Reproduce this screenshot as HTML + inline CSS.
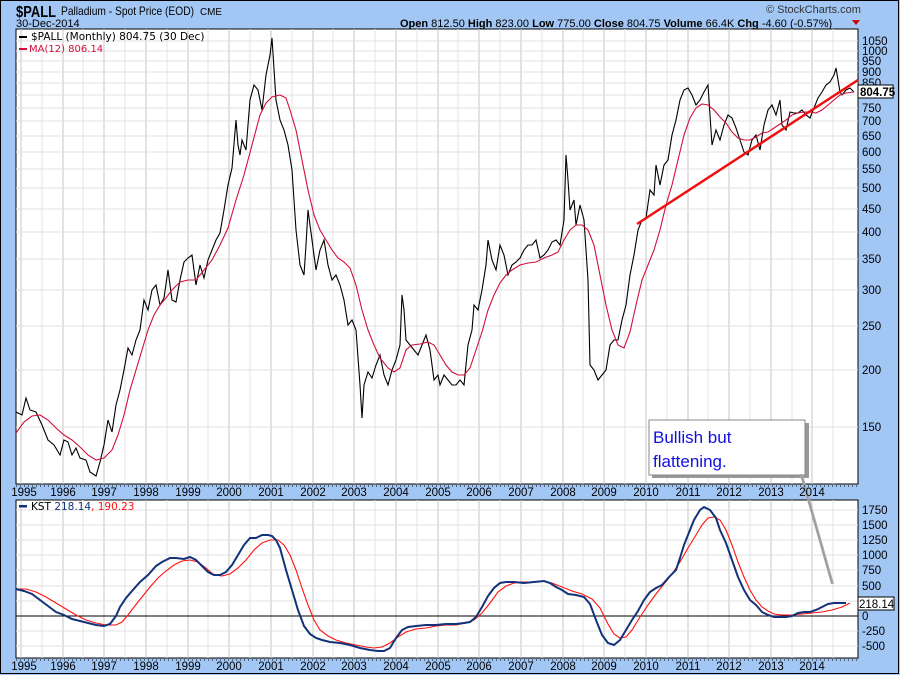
<!DOCTYPE html>
<html><head><meta charset="utf-8"><style>
html,body{margin:0;padding:0;background:#a3c7f5;}
svg{display:block;font-family:"Liberation Sans",sans-serif;}
</style></head><body>
<svg width="900" height="675" viewBox="0 0 900 675" xmlns="http://www.w3.org/2000/svg">
<rect x="0" y="0" width="900" height="675" fill="#a3c7f5"/>
<rect x="0.5" y="0.5" width="898" height="673" fill="none" stroke="#000"/>
<!-- header -->
<text x="16" y="17" font-size="16" font-weight="bold" textLength="40" lengthAdjust="spacingAndGlyphs">$PALL</text>
<text x="61" y="15" font-size="12" textLength="133" lengthAdjust="spacingAndGlyphs">Palladium - Spot Price (EOD)</text>
<text x="200" y="15" font-size="10" textLength="22" lengthAdjust="spacingAndGlyphs">CME</text>
<text x="16" y="27" font-size="11">30-Dec-2014</text>
<text x="766" y="13" font-size="11" fill="#333">© StockCharts.com</text>
<text x="400" y="27" font-size="11"><tspan font-weight="bold">Open</tspan> 812.50  <tspan font-weight="bold">High</tspan> 823.00  <tspan font-weight="bold">Low</tspan> 775.00  <tspan font-weight="bold">Close</tspan> 804.75  <tspan font-weight="bold">Volume</tspan> 66.4K  <tspan font-weight="bold">Chg</tspan> -4.60 (-0.57%)</text>
<path d="M852 20 L860 20 L856 25 Z" fill="#c00"/>

<!-- main plot -->
<rect x="16" y="29" width="842" height="455" fill="#fff" stroke="#000"/>
<rect x="16" y="500" width="842" height="158" fill="#fff" stroke="#000"/>
<g stroke-width="1">
<g stroke="#e4e4e4">
<path d="M42 29V484M83 29V484M125 29V484M167 29V484M208 29V484M250 29V484M292 29V484M333 29V484M375 29V484M417 29V484M458 29V484M500 29V484M542 29V484M583 29V484M625 29V484M667 29V484M708 29V484M750 29V484M792 29V484M833 29V484"/>
<path d="M42 500V658M83 500V658M125 500V658M167 500V658M208 500V658M250 500V658M292 500V658M333 500V658M375 500V658M417 500V658M458 500V658M500 500V658M542 500V658M583 500V658M625 500V658M667 500V658M708 500V658M750 500V658M792 500V658M833 500V658"/>
</g>
<g stroke="#c4c4c4">
<path d="M21 29V484M63 29V484M104 29V484M146 29V484M188 29V484M229 29V484M271 29V484M313 29V484M354 29V484M396 29V484M438 29V484M479 29V484M521 29V484M563 29V484M604 29V484M646 29V484M688 29V484M729 29V484M771 29V484M812 29V484"/>
<path d="M21 500V658M63 500V658M104 500V658M146 500V658M188 500V658M229 500V658M271 500V658M313 500V658M354 500V658M396 500V658M438 500V658M479 500V658M521 500V658M563 500V658M604 500V658M646 500V658M688 500V658M729 500V658M771 500V658M812 500V658"/>
</g>
<g stroke="#e0e0e0">
<path d="M16 41H858M16 51H858M16 61H858M16 72H858M16 83H858M16 95H858M16 108H858M16 121H858M16 136H858M16 152H858M16 169H858M16 188H858M16 209H858M16 232H858M16 259H858M16 290H858M16 326H858M16 370H858M16 427H858"/>
<path d="M16 510H858M16 525H858M16 540H858M16 555H858M16 570H858M16 586H858M16 601H858M16 631H858M16 646H858"/>
</g>
</g>
<line x1="16" y1="616" x2="858" y2="616" stroke="#000"/>

<!-- price -->
<polyline fill="none" stroke="#000" stroke-width="1.1" points="16,412 22,415 26,398 30,410 36,412 42,425 48,440 54,445 60,455 64,440 68,442 72,455 76,448 80,458 86,460 90,472 96,476 100,462 104,445 108,420 112,432 116,405 120,390 124,370 128,348 132,355 136,340 140,330 144,300 148,310 152,290 156,285 160,305 164,298 168,270 172,300 176,302 180,280 184,262 188,258 192,255 196,285 200,265 204,278 208,260 212,250 216,240 220,233 224,210 228,185 232,168 236,120 238,145 240,155 242,140 246,150 250,100 254,85 258,90 262,110 266,75 270,55 272,38 276,100 280,120 284,130 288,145 292,170 296,230 300,265 304,275 306,245 308,210 312,240 316,270 320,250 324,240 328,265 332,280 336,275 340,285 344,300 348,325 352,320 356,330 360,385 362,418 364,385 368,372 372,378 376,365 380,355 384,375 388,385 392,370 396,360 400,345 402,295 404,310 406,340 410,345 414,350 418,355 422,345 426,335 430,350 434,380 438,375 440,385 444,375 448,380 452,385 456,385 460,380 464,385 468,345 472,330 474,305 478,310 482,290 486,265 488,240 492,260 496,270 500,245 504,255 508,275 512,265 516,262 520,258 524,250 528,245 532,245 536,240 540,258 544,255 548,250 552,242 556,240 560,245 564,220 566,155 568,180 570,210 574,200 576,225 580,205 584,220 588,280 590,365 594,370 598,380 602,375 606,370 610,345 614,340 618,340 622,320 626,305 630,275 634,255 638,230 642,220 646,218 650,190 654,195 656,165 660,185 664,165 668,160 672,135 676,120 680,100 684,90 688,88 692,95 696,105 700,100 704,92 708,85 710,115 712,145 716,130 720,140 724,125 728,115 732,118 736,128 740,140 744,152 748,155 752,140 756,135 760,150 764,125 768,110 772,105 776,115 780,100 782,125 786,130 790,112 794,113 798,113 802,110 806,115 810,118 814,108 818,98 822,92 826,85 830,82 834,75 836,68 840,92 842,95 846,90 850,88 854,92"/>
<polyline fill="none" stroke="#d0103a" stroke-width="1.1" points="16,433 24,422 32,416 40,415 48,420 56,428 64,435 72,440 80,447 88,455 96,460 104,458 112,450 118,435 124,415 130,390 136,370 142,350 148,330 154,315 160,305 166,298 172,290 180,282 188,280 196,280 204,270 212,260 220,245 228,228 236,200 244,175 252,145 260,115 266,103 272,97 280,95 286,98 290,110 296,130 302,160 308,190 314,215 320,230 326,240 332,250 338,258 344,262 350,268 356,285 362,310 368,330 374,345 380,358 388,368 394,372 400,368 406,350 412,345 420,344 428,342 434,345 440,355 446,365 452,372 458,375 464,375 470,368 476,350 482,332 488,310 494,295 500,283 506,275 512,270 520,265 528,263 536,262 544,258 552,255 558,252 564,240 570,230 576,225 582,225 588,230 594,245 600,275 606,305 612,330 618,345 624,348 630,332 636,305 642,280 648,265 654,250 660,230 666,205 672,185 678,160 684,135 690,118 696,108 702,104 708,105 714,110 720,117 726,123 732,132 738,138 744,140 750,140 756,137 762,133 768,132 774,128 780,124 786,120 792,115 798,113 804,112 810,112 816,113 822,110 828,105 834,100 840,95 846,93 854,92"/>
<line x1="637" y1="224" x2="858" y2="80" stroke="#f01010" stroke-width="2.5"/>

<!-- legend -->
<rect x="19" y="36" width="8" height="2" fill="#000"/>
<text x="31" y="40" font-size="10.5" font-family="DejaVu Sans,sans-serif">$PALL (Monthly) 804.75 (30 Dec)</text>
<rect x="19" y="48" width="8" height="2" fill="#d0103a"/>
<text x="29" y="52" font-size="10" fill="#d0103a" font-family="DejaVu Sans,sans-serif">MA(12) 806.14</text>

<!-- annotation -->
<rect x="652" y="423" width="157" height="55" fill="#999"/>
<rect x="649" y="420" width="156" height="55" fill="#fff" stroke="#888"/>
<text x="653" y="443" font-size="17" fill="#1010e0">Bullish but</text>
<text x="653" y="467" font-size="17" fill="#1010e0">flattening.</text>
<polygon points="800,475 803,475 834,584 831,584" fill="#aaa"/>
<line x1="801" y1="474" x2="832" y2="583" stroke="#999"/>

<!-- price axis -->
<g font-size="11.5">
<text x="862" y="45">1050</text><text x="862" y="55">1000</text><text x="862" y="65">950</text><text x="862" y="76">900</text><text x="862" y="87">850</text>
<text x="862" y="112">750</text><text x="862" y="125">700</text><text x="862" y="140">650</text><text x="862" y="156">600</text><text x="862" y="173">550</text><text x="862" y="192">500</text><text x="862" y="213">450</text><text x="862" y="236">400</text><text x="862" y="263">350</text><text x="862" y="294">300</text><text x="862" y="330">250</text><text x="862" y="374">200</text><text x="862" y="431">150</text>
</g>
<rect x="858" y="85" width="35" height="13" fill="#fff" stroke="#000"/>
<text x="860" y="96" font-size="11.5" font-weight="bold">804.75</text>

<!-- year labels -->
<g font-size="11.5" text-anchor="middle">
<text x="24" y="496">1995</text><text x="63" y="496">1996</text><text x="104" y="496">1997</text><text x="146" y="496">1998</text><text x="188" y="496">1999</text><text x="229" y="496">2000</text><text x="271" y="496">2001</text><text x="313" y="496">2002</text><text x="354" y="496">2003</text><text x="396" y="496">2004</text><text x="438" y="496">2005</text><text x="479" y="496">2006</text><text x="521" y="496">2007</text><text x="563" y="496">2008</text><text x="604" y="496">2009</text><text x="646" y="496">2010</text><text x="688" y="496">2011</text><text x="729" y="496">2012</text><text x="771" y="496">2013</text><text x="812" y="496">2014</text>
<text x="24" y="670">1995</text><text x="63" y="670">1996</text><text x="104" y="670">1997</text><text x="146" y="670">1998</text><text x="188" y="670">1999</text><text x="229" y="670">2000</text><text x="271" y="670">2001</text><text x="313" y="670">2002</text><text x="354" y="670">2003</text><text x="396" y="670">2004</text><text x="438" y="670">2005</text><text x="479" y="670">2006</text><text x="521" y="670">2007</text><text x="563" y="670">2008</text><text x="604" y="670">2009</text><text x="646" y="670">2010</text><text x="688" y="670">2011</text><text x="729" y="670">2012</text><text x="771" y="670">2013</text><text x="812" y="670">2014</text>
</g>
<path d="M16 486H858M16 660H858" stroke="#000" stroke-dasharray="1 3"/>

<!-- KST -->
<polyline fill="none" stroke="#ff1010" stroke-width="1.1" points="16,589 26,589 36,592 46,597 56,603 66,609 76,615 86,620 96,623 106,625 116,625 122,622 128,615 134,607 142,597 150,587 158,578 166,571 174,565 182,561 190,560 198,562 206,568 214,575 222,576 230,574 238,568 246,560 254,550 262,543 270,540 278,540 284,545 290,555 296,570 302,588 308,605 314,620 320,630 328,636 336,640 346,643 356,645 366,647 374,648 382,647 390,643 398,637 406,632 416,629 426,628 436,626 446,625 456,625 466,623 474,620 482,613 490,603 498,592 506,586 514,583 522,582 532,582 542,581 552,583 562,587 572,591 582,594 592,599 600,608 608,624 614,634 620,638 626,637 632,630 640,617 648,605 656,594 664,584 672,574 680,562 688,548 696,535 702,525 708,518 714,517 720,520 726,530 732,545 738,562 744,577 750,590 756,600 762,607 768,611 774,614 782,615 792,615 802,614 812,613 822,612 832,610 842,607 850,603"/>
<polyline fill="none" stroke="#12327a" stroke-width="2" points="16,589 24,591 32,594 40,600 48,606 56,612 64,615 72,619 80,621 88,623 96,625 104,626 110,624 116,616 120,607 126,598 132,591 140,582 148,575 156,566 162,562 170,558 176,558 184,559 190,557 196,560 202,566 208,572 214,575 220,575 226,572 232,565 238,555 244,545 250,538 256,538 262,535 268,535 272,536 276,540 280,548 286,570 292,590 298,610 304,626 310,634 316,638 322,640 330,642 340,643 350,645 360,648 370,650 378,651 384,651 390,648 396,638 402,630 408,627 416,626 426,625 436,625 446,624 456,624 464,623 470,622 476,617 482,607 488,596 494,588 500,583 506,582 514,582 524,583 534,582 544,581 550,583 556,587 562,590 568,594 576,595 584,597 590,604 596,620 602,635 608,643 614,645 620,640 626,630 632,620 638,611 644,600 650,592 656,588 662,585 670,576 676,570 680,558 684,545 688,535 694,520 700,510 704,507 710,510 716,518 720,530 726,543 732,560 738,577 744,590 750,600 756,605 762,612 768,615 774,617 780,617 786,617 792,616 798,613 804,612 810,612 816,610 822,607 828,604 834,603 840,603 846,603"/>
<rect x="19" y="505" width="8" height="2.5" fill="#12327a"/>
<text x="31" y="510" font-size="10.5" font-family="DejaVu Sans,sans-serif">KST <tspan fill="#12327a">218.14</tspan><tspan fill="#ff1010">, 190.23</tspan></text>
<g font-size="11.5">
<text x="862" y="514">1750</text><text x="862" y="529">1500</text><text x="862" y="544">1250</text><text x="862" y="559">1000</text><text x="862" y="574">750</text><text x="862" y="590">500</text><text x="862" y="620">0</text><text x="862" y="635">-250</text><text x="862" y="650">-500</text>
</g>
<rect x="858" y="597" width="36" height="13" fill="#fff" stroke="#000"/>
<text x="859" y="608" font-size="11.5">218.14</text>
</svg>
</body></html>
